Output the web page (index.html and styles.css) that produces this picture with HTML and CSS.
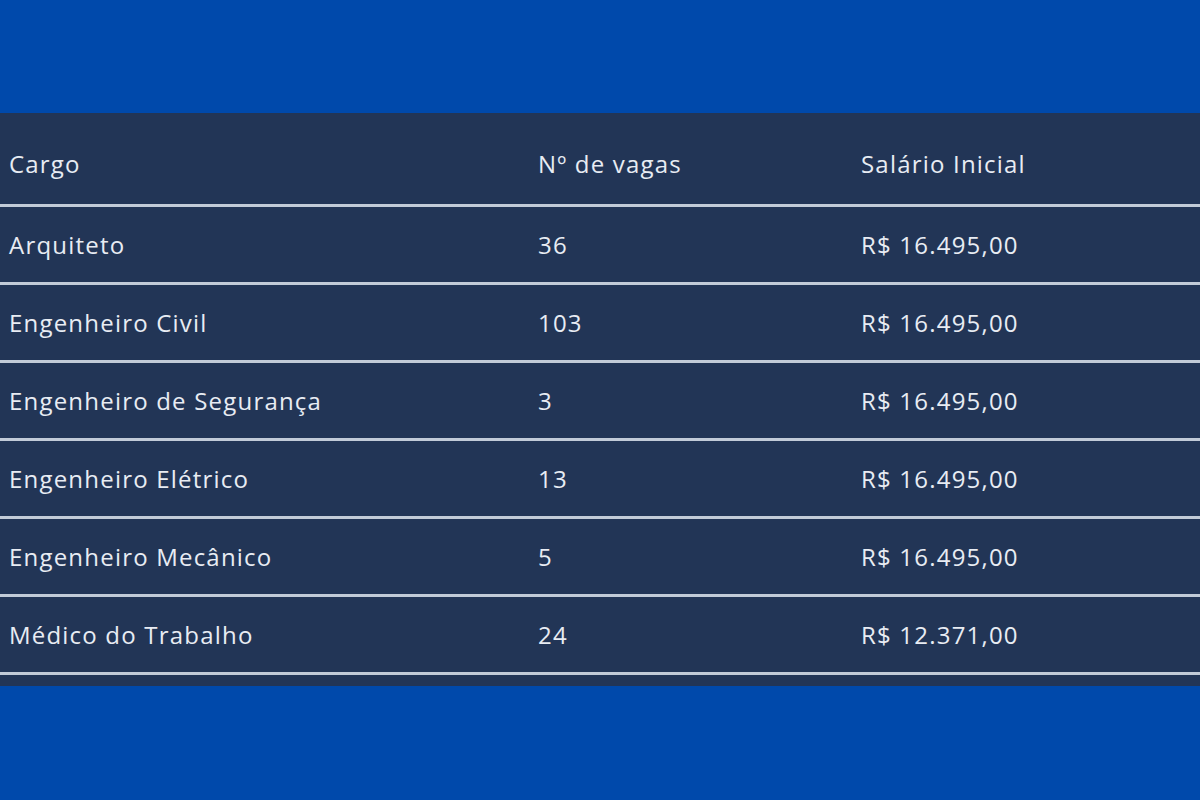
FILE: index.html
```html
<!DOCTYPE html>
<html lang="pt-BR">
<head>
<meta charset="utf-8">
<link rel="stylesheet" href="styles.css">
</head>
<body>
<div class="panel">
  <table class="vagas">
    <thead>
      <tr><th class="c1">Cargo</th><th class="c2">Nº de vagas</th><th class="c3">Salário Inicial</th></tr>
    </thead>
    <tbody>
      <tr><td>Arquiteto</td><td>36</td><td>R$ 16.495,00</td></tr>
      <tr><td>Engenheiro Civil</td><td>103</td><td>R$ 16.495,00</td></tr>
      <tr><td>Engenheiro de Segurança</td><td>3</td><td>R$ 16.495,00</td></tr>
      <tr><td>Engenheiro Elétrico</td><td>13</td><td>R$ 16.495,00</td></tr>
      <tr><td>Engenheiro Mecânico</td><td>5</td><td>R$ 16.495,00</td></tr>
      <tr><td>Médico do Trabalho</td><td>24</td><td>R$ 12.371,00</td></tr>
    </tbody>
  </table>
</div>
</body>
</html>
```

FILE: styles.css
```css
html, body {
  margin: 0;
  padding: 0;
}
body {
  background: #0049ab;
  width: 1200px;
  height: 800px;
  padding-top: 113px;
  box-sizing: border-box;
  font-family: "Open Sans", "DejaVu Sans", sans-serif;
  color: #e8ecf3;
}
.panel {
  background: #223556;
  padding-bottom: 11px;
}
.vagas {
  width: 100%;
  border-collapse: collapse;
  font-size: 24px;
  letter-spacing: 1.2px;
}
.vagas th {
  font-weight: 400;
  text-align: left;
  height: 92px;
  padding: 10px 0 0 0;
  box-sizing: border-box;
  border-bottom: 3px solid #c2cbd8;
}
.vagas td {
  height: 75px;
  padding: 0;
  border-bottom: 3px solid #c2cbd8;
}
.vagas th:first-child, .vagas td:first-child {
  padding-left: 9px;
  width: 529px;
}
.vagas th:nth-child(2), .vagas td:nth-child(2) {
  width: 323px;
}
```
